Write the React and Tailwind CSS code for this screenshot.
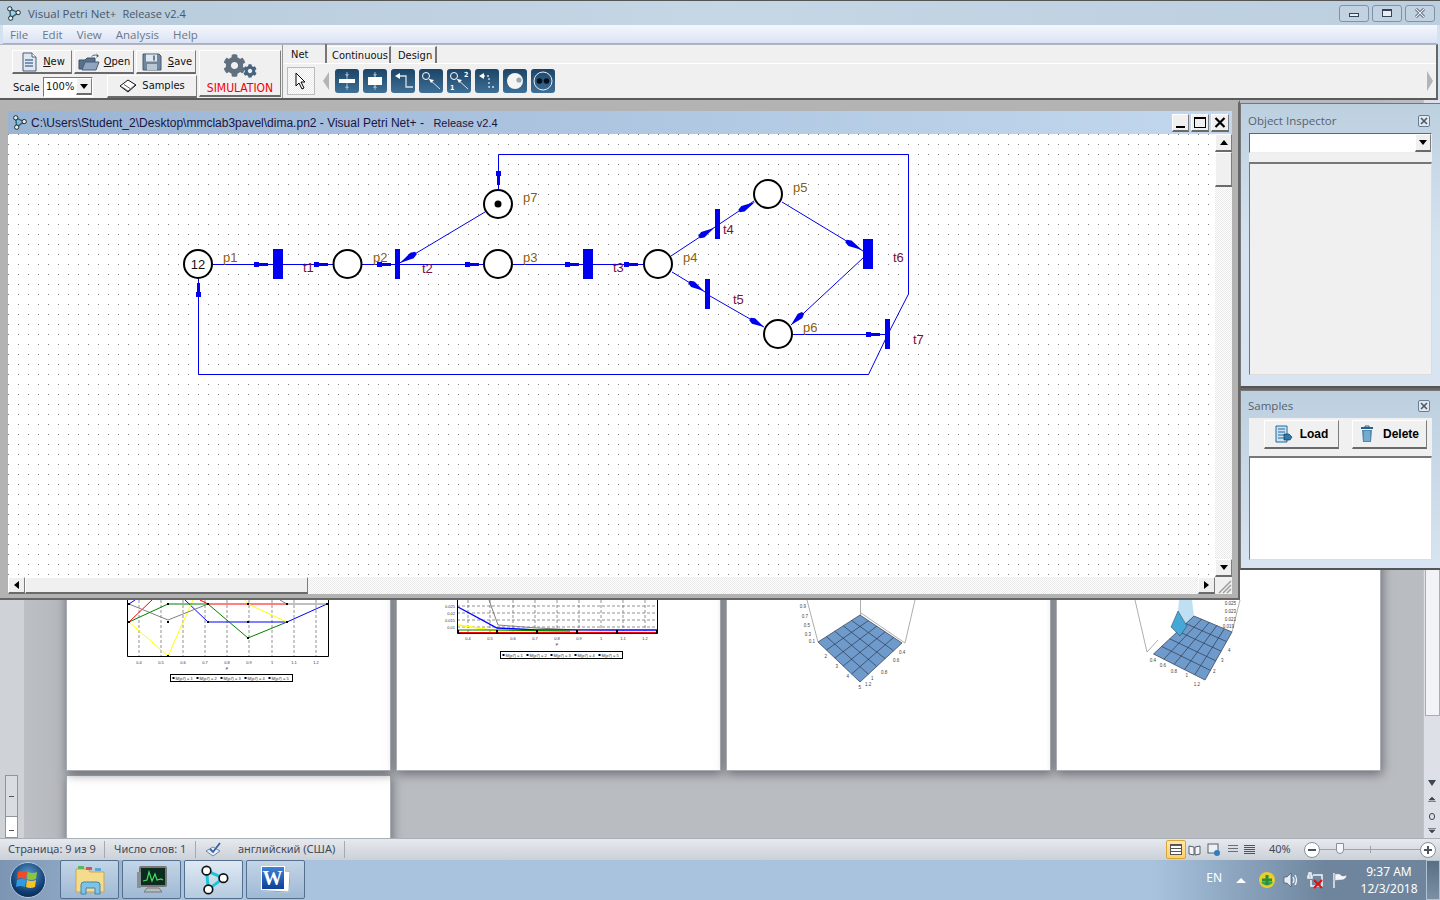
import { FaCog } from "react-icons/fa";

const raised = "border border-t-white border-l-white border-r-[#7d7d7d] border-b-2 border-b-[#6a6a6a] bg-[#f0f0f0]";
const dither = "bg-[repeating-conic-gradient(#e9e9e9_0_25%,#ffffff_0_50%)] bg-[length:2px_2px]";

function NetLogo({ size = 16, light = false }) {
  const stroke = light ? "#17c7d8" : "#1f6f80";
  const fill = light ? "#ffffff" : "#dfeef2";
  return (
    <svg width={size} height={size} viewBox="0 0 16 16">
      <path d="M4 3 L13 7 M13 7 L5 13 M4 3 L5 13" stroke={stroke} strokeWidth="1.6" fill="none" />
      <circle cx="4" cy="3" r="2.3" fill={fill} stroke="#111" strokeWidth="0.9" />
      <circle cx="13" cy="7" r="2.3" fill={fill} stroke="#111" strokeWidth="0.9" />
      <circle cx="5" cy="13" r="2.3" fill={fill} stroke="#111" strokeWidth="0.9" />
    </svg>
  );
}

function NewIcon() {
  return (
    <svg width="20" height="20" viewBox="0 0 20 20">
      <path d="M4 1h9l4 4v14H4z" fill="#dfe7f0" stroke="#4a5d78" />
      <path d="M13 1v4h4" fill="#fff" stroke="#4a5d78" />
      <path d="M6 8h8M6 11h8M6 14h8" stroke="#5a7a9c" strokeWidth="1.3" />
    </svg>
  );
}

function OpenIcon() {
  return (
    <svg width="22" height="20" viewBox="0 0 22 20">
      <path d="M1 8h6l2-2h8v11H1z" fill="#58708c" stroke="#3f5268" />
      <path d="M4 18l3-8h14l-3 8z" fill="#8fa5bd" stroke="#4a5d78" />
      <path d="M13 5c2-3 4-3 6-2l-1-2 3 3-3 2 1-2c-2-1-4 0-6 1z" fill="#3f5f86" />
    </svg>
  );
}

function SaveIcon() {
  return (
    <svg width="20" height="18" viewBox="0 0 20 18">
      <path d="M1 1h16l2 2v14H1z" fill="#71859b" stroke="#4b5c70" />
      <rect x="4" y="1.5" width="11" height="7" fill="#dfe6ee" />
      <rect x="5" y="11" width="10" height="6" fill="#b9c6d4" />
      <rect x="11" y="2.5" width="2" height="5" fill="#6d8098" />
    </svg>
  );
}

function BookIcon() {
  return (
    <svg width="18" height="14" viewBox="0 0 18 14">
      <path d="M1 7L9 1l8 5-8 7z" fill="#fff" stroke="#111" />
      <path d="M3 8l6 4 7-6M5 5.5l6 4" stroke="#333" fill="none" strokeWidth="0.8" />
    </svg>
  );
}

function ToolIcon({ children }) {
  return (
    <div className="w-[24px] h-[24px] rounded-[3px] bg-gradient-to-b from-[#1b4467] to-[#3f7097] shrink-0">
      <svg width="24" height="24" viewBox="0 0 24 24">{children}</svg>
    </div>
  );
}

const TOOL_ICONS = [
  <g key="a"><path d="M12 3v18" stroke="#9fb3c5" /><path d="M10 5l2 3 2-3M10 19l2-3 2 3" fill="#9fb3c5" /><rect x="4" y="10" width="16" height="4" fill="#fff" /></g>,
  <g key="b"><path d="M12 3v18" stroke="#9fb3c5" /><path d="M10 5l2 3 2-3M10 19l2-3 2 3" fill="#9fb3c5" /><rect x="5" y="8" width="14" height="8" fill="#fff" /></g>,
  <g key="c"><path d="M8 7h7v11h7" stroke="#d6e1ea" strokeWidth="1.3" fill="none" /><path d="M9 4L4 7l5 3z" fill="#fff" /></g>,
  <g key="d"><circle cx="7" cy="7" r="3.5" fill="none" stroke="#fff" /><path d="M10 10l11 10" stroke="#d6e1ea" /><path d="M10 10l5 1-3 3z" fill="#fff" /></g>,
  <g key="e"><circle cx="7" cy="7" r="3.5" fill="none" stroke="#fff" /><path d="M10 10l11 10" stroke="#d6e1ea" /><path d="M10 10l5 1-3 3z" fill="#fff" /><text x="17" y="8" fontSize="7" fontWeight="700" fill="#fff">2</text><text x="3" y="21" fontSize="7" fontWeight="700" fill="#fff">1</text></g>,
  <g key="f"><path d="M8 7h6v11h7" stroke="#d6e1ea" strokeWidth="1.3" strokeDasharray="2 2" fill="none" /><path d="M9 4L4 7l5 3z" fill="#fff" /></g>,
  <g key="g"><circle cx="12" cy="12" r="8" fill="#f4f4f4" /><circle cx="16" cy="11" r="2.6" fill="#9aa8b4" /></g>,
  <g key="h"><circle cx="12" cy="12" r="9" fill="none" stroke="#e8eef3" /><circle cx="8.5" cy="12" r="2.8" fill="#05121d" /><circle cx="15.5" cy="12" r="2.8" fill="#05121d" /></g>,
];

function Toolbar() {
  return (
    <div className="flex h-[56px] bg-[#f0f0f0] border-b-2 border-[#5a5a5a] border-r-2 border-r-[#666] mr-[2px] border-t border-t-[#b0b6c4]">
      <div className="flex w-[283px] pl-[12px] pt-[5px] gap-[1px] border-r border-r-[#999]">
        <div className="flex flex-col w-[186px] gap-[1px]">
          <div className="flex gap-[2px]">
            <div className={`${raised} w-[60px] h-[24px] flex items-center justify-center gap-[4px]`}>
              <NewIcon /><span className="mt-[2px] underline decoration-1 underline-offset-1">N</span><span className="mt-[2px] -ml-[4px]">ew</span>
            </div>
            <div className={`${raised} w-[60px] h-[24px] flex items-center justify-center gap-[4px]`}>
              <OpenIcon /><span className="mt-[2px] underline decoration-1 underline-offset-1">O</span><span className="mt-[2px] -ml-[4px]">pen</span>
            </div>
            <div className={`${raised} w-[60px] h-[24px] flex items-center justify-center gap-[6px] pl-[2px]`}>
              <SaveIcon /><span className="mt-[2px] underline decoration-1 underline-offset-1">S</span><span className="mt-[2px] -ml-[6px]">ave</span>
            </div>
          </div>
          <div className="flex items-center">
            <span className="w-[31px] pl-[1px] pt-[3px]">Scale</span>
            <div className="w-[50px] h-[20px] bg-white border border-t-[#777] border-l-[#777] border-r-white border-b-white flex items-center pl-[2px] justify-between">
              <span className="pt-[1px]">100%</span>
              <div className={`${raised} w-[16px] h-[17px] flex items-center justify-center`}>
                <div className="w-0 h-0 border-x-[4px] border-x-transparent border-t-[5px] border-t-black" />
              </div>
            </div>
            <div className={`${raised} ml-[14px] w-[90px] h-[23px] flex items-center justify-center gap-[5px]`}>
              <BookIcon /><span className="pt-[1px]">Samples</span>
            </div>
          </div>
        </div>
        <div className={`${raised} w-[82px] h-[47px] flex flex-col items-center text-[#f00000] text-[12px] leading-[14px]`}>
          <div className="relative h-[30px] w-[34px] text-[#61707f] shrink-0">
            <FaCog className="absolute left-0 top-[3px] text-[23px]" />
            <FaCog className="absolute left-[20px] top-[13px] text-[14px] text-[#46637f]" />
          </div>
          SIMULATION
        </div>
      </div>
      <div className="flex-1 flex flex-col pl-[1px]">
        <div className="flex h-[19px] items-end border-b border-b-white">
          <div className="w-[43px] h-[19px] pl-[7px] pt-[3px] border-r-2 border-r-[#777] flex items-center">Net</div>
          <div className="w-[64px] h-[17px] pl-[5px] pt-[3px] border-t border-t-white border-r-2 border-r-[#777] flex items-center">Continuous</div>
          <div className="w-[45px] h-[17px] pl-[6px] pt-[3px] ml-[1px] border-t border-t-white border-r-2 border-r-[#777] flex items-center">Design</div>
        </div>
        <div className="flex items-center pt-[3px] pr-[3px]">
          <div className={`w-[28px] h-[28px] ml-[3px] border border-[#bbb] ${dither} flex items-center justify-center`}>
            <svg width="14" height="18" viewBox="0 0 14 18">
              <path d="M2 1v13l3-3 3 6 2-1-3-6h4z" fill="#fff" stroke="#000" />
            </svg>
          </div>
          <div className="w-0 h-0 ml-[8px] mr-[6px] border-y-[9px] border-y-transparent border-r-[6px] border-r-[#b4b4b4]" />
          <div className="flex gap-[4px]">{TOOL_ICONS.map((g, i) => <ToolIcon key={i}>{g}</ToolIcon>)}</div>
          <div className="ml-auto w-0 h-0 border-y-[10px] border-y-transparent border-l-[6px] border-l-[#b4b4b4]" />
        </div>
      </div>
    </div>
  );
}

function TopFrame() {
  return (
    <header className="h-[100px] shrink-0 bg-[#d2e2f0] text-[#111] text-[11px] [font-family:'DejaVu_Sans_Condensed','Liberation_Sans',sans-serif]">
      <div className="h-[25px] flex items-center pl-[6px] border-t border-t-[#555] bg-gradient-to-r from-[#b7cbdb] via-[#c5d6e5] to-[#bccfde] [font-family:'Open_Sans',sans-serif] text-[11.5px] text-[#47586a]">
        <NetLogo size={15} />
        <span className="ml-[7px] pt-[1px]">Visual Petri Net+&nbsp; <span className="text-[11px]">Release v2.4</span></span>
        <div className="ml-auto flex gap-[3px] pr-[5px]">
          {[0, 1, 2].map((i) => (
            <div key={i} className="w-[30px] h-[17px] rounded-[3px] border border-[#7f93a8] bg-[#c2d2e0] flex items-center justify-center">
              {i === 0 && <div className="w-[10px] h-[4px] bg-[#e8eef3] border border-[#33445a] mt-[3px]" />}
              {i === 1 && <div className="w-[10px] h-[8px] bg-[#e8eef3] border border-t-2 border-[#33445a]" />}
              {i === 2 && <svg width="12" height="10" viewBox="0 0 12 10"><path d="M2 1l8 8M10 1l-8 8" stroke="#33445a" strokeWidth="2.6" /><path d="M2 1l8 8M10 1l-8 8" stroke="#eef2f5" strokeWidth="1.2" /></svg>}
            </div>
          ))}
        </div>
      </div>
      <div className="h-[19px] flex items-center bg-gradient-to-b from-[#f4f7fc] to-[#dbe2f4] border-b border-b-[#a8b0c4] text-[11.5px] text-[#6b7887] [font-family:'Open_Sans',sans-serif] mr-[3px] ml-[3px] pl-[7px] pt-[2px] gap-[14px]">
        <span>File</span><span>Edit</span><span>View</span><span>Analysis</span><span>Help</span>
      </div>
      <Toolbar />
    </header>
  );
}

const PLACES = [
  { x: 198, y: 264, text: "12" },
  { x: 347.5, y: 264 },
  { x: 498, y: 264 },
  { x: 658, y: 264 },
  { x: 768, y: 194 },
  { x: 778, y: 334 },
  { x: 498, y: 204, token: true },
];

const TRANSITIONS = [
  [273, 249, 10, 30], [395, 249, 5, 30], [583, 249, 10, 30], [715, 209, 5, 30],
  [705, 279, 5, 30], [863, 239, 10, 30], [885, 319, 5, 30],
];

const LINES = [
  "213,264.5 273,264.5", "283,264.5 333,264.5", "362,264.5 395,264.5", "400,264.5 483,264.5",
  "513,264.5 583,264.5", "593,264.5 643,264.5", "793,334.5 885,334.5",
  "888,334 908.5,294 908.5,154.5 498.5,154.5 498.5,189",
  "888,334 868.5,374.5 198.5,374.5 198.5,279",
  "485,212 398,264", "671,256 718,225", "718,225 754,201", "782,202 863,251",
  "863,258 791,325", "672,272 705,292", "710,296 764,327",
];

// square + bar arrowheads on the straight arcs
const BAR_ARROWS_H = [254, 314, 377, 465, 565, 624, 866];
const BAR_Y = [264, 264, 264, 264, 264, 264, 334];

// tapered heads on the slanted arcs: from tail to tip
const HEADS = [
  [416, 253, 400, 263], [699, 237, 714, 228], [739, 211, 755, 202], [846, 241, 862, 250],
  [803, 313, 791, 325], [689, 282, 704, 291], [750, 319, 764, 327],
];

const LABELS = [
  ["p1", 223, 258, "p"], ["t1", 303, 268, "t"], ["p2", 373, 258, "p"], ["t2", 422, 269, "t"],
  ["p3", 523, 258, "p"], ["t3", 613, 268, "t"], ["p4", 683, 258, "p"], ["t4", 723, 230, "t"],
  ["p5", 793, 188, "p"], ["t5", 733, 300, "t"], ["t6", 893, 258, "t"], ["p6", 803, 328, "p"],
  ["t7", 913, 340, "t"], ["p7", 523, 198, "p"],
];

function headPoints([x1, y1, x2, y2]) {
  const d = Math.hypot(x2 - x1, y2 - y1);
  const ux = (x2 - x1) / d, uy = (y2 - y1) / d;
  const nx = -uy, ny = ux;
  const mx = x1 + ux * d * 0.25, my = y1 + uy * d * 0.25;
  return [
    [x1 + nx * 1.5, y1 + ny * 1.5], [mx + nx * 3.2, my + ny * 3.2], [x2, y2],
    [mx - nx * 3.2, my - ny * 3.2], [x1 - nx * 1.5, y1 - ny * 1.5],
  ].map((p) => p.join(",")).join(" ");
}

function PetriNet() {
  return (
    <svg width="1207" height="443" viewBox="8 134 1207 443" className="block bg-white">
      <defs>
        <pattern id="dots" x="8" y="4" width="10" height="10" patternUnits="userSpaceOnUse">
          <rect width="1" height="1" fill="#808080" />
        </pattern>
      </defs>
      <rect x="8" y="134" width="1207" height="443" fill="url(#dots)" />
      {LINES.map((p) => <polyline key={p} points={p} fill="none" stroke="#0000ee" strokeWidth="1" />)}
      {BAR_ARROWS_H.map((x, i) => (
        <g key={x} fill="#0000f0">
          <rect x={x} y={BAR_Y[i] - 2} width="5" height="5" />
          <rect x={x + 5} y={BAR_Y[i] - 1} width="9" height="3" />
        </g>
      ))}
      <g fill="#0000f0">
        <rect x="496" y="171" width="5" height="5" />
        <rect x="497" y="176" width="3" height="9" />
        <rect x="196" y="292" width="5" height="5" />
        <rect x="197" y="283" width="3" height="9" />
      </g>
      {HEADS.map((h) => <polygon key={h.join()} points={headPoints(h)} fill="#0000f0" />)}
      {TRANSITIONS.map(([x, y, w, h]) => <rect key={x} x={x} y={y} width={w} height={h} fill="#0000f0" />)}
      {PLACES.map((p) => (
        <g key={p.x + "-" + p.y}>
          <circle cx={p.x} cy={p.y} r="14" fill="#fff" stroke="#000" strokeWidth="2" />
          {p.token && <circle cx={p.x} cy={p.y} r="3.5" fill="#000" />}
          {p.text && <text x={p.x} y={p.y + 4.5} textAnchor="middle" fontSize="13" fill="#111" fontFamily="Liberation Sans">{p.text}</text>}
        </g>
      ))}
      {LABELS.map(([t, x, y, k]) => (
        <text key={t} x={x} y={y + 4} fontSize="13" fontFamily="Liberation Sans" fill={k === "p" ? "#8f5c08" : "#74103c"}>{t}</text>
      ))}
    </svg>
  );
}

function ChildWindow() {
  return (
    <section className="absolute left-0 top-0 w-[1240px] h-[500px] bg-[#b3b3b3] border-t-[3px] border-t-[#b3b3b3] border-b-2 border-b-[#666] border-r-2 border-r-[#666] pl-[8px] pt-[8px] flex flex-col">
      <div className="h-[23px] w-[1224px] flex items-center pl-[4px] bg-gradient-to-r from-[#9ab4d4] to-[#c3d8ee] text-[12px] text-[#1a1440] [font-family:'Liberation_Sans',sans-serif]">
        <NetLogo size={15} />
        <span className="ml-[4px]">C:\Users\Student_2\Desktop\mmclab3pavel\dima.pn2 - Visual Petri Net+ - <span className="text-[11px]">&nbsp;&nbsp;Release v2.4</span></span>
        <div className="ml-auto flex gap-[2px] pr-[3px]">
          <div className={`${raised} w-[17px] h-[18px] flex items-end justify-center pb-[2px]`}><div className="w-[9px] h-[2px] bg-black" /></div>
          <div className={`${raised} w-[18px] h-[18px] flex items-center justify-center`}><div className="w-[12px] h-[11px] border border-t-2 border-black" /></div>
          <div className={`${raised} w-[18px] h-[18px] flex items-center justify-center`}>
            <svg width="12" height="11" viewBox="0 0 12 11"><path d="M1.5 1l9 9M10.5 1l-9 9" stroke="#000" strokeWidth="2.2" /></svg>
          </div>
        </div>
      </div>
      <div className="flex w-[1224px]">
        <PetriNet />
        <div className={`w-[17px] h-[443px] flex flex-col ${dither}`}>
          <div className={`${raised} h-[18px] flex items-center justify-center`}><div className="w-0 h-0 border-x-[4px] border-x-transparent border-b-[5px] border-b-black" /></div>
          <div className={`${raised} h-[35px]`} />
          <div className="flex-1" />
          <div className={`${raised} h-[18px] flex items-center justify-center`}><div className="w-0 h-0 border-x-[4px] border-x-transparent border-t-[5px] border-t-black" /></div>
        </div>
      </div>
      <div className="flex w-[1224px] h-[17px]">
        <div className={`flex w-[1207px] ${dither}`}>
          <div className={`${raised} w-[17px] flex items-center justify-center`}><div className="w-0 h-0 border-y-[4px] border-y-transparent border-r-[5px] border-r-black" /></div>
          <div className={`${raised} w-[283px]`} />
          <div className="flex-1" />
          <div className={`${raised} w-[17px] flex items-center justify-center`}><div className="w-0 h-0 border-y-[4px] border-y-transparent border-l-[5px] border-l-black" /></div>
        </div>
        <div className="w-[17px] bg-[#f0f0f0] flex items-end justify-end overflow-hidden">
          <svg width="14" height="14" viewBox="0 0 14 14"><path d="M13 1L1 13M13 5L5 13M13 9l-4 4" stroke="#999" strokeWidth="1.4" /></svg>
        </div>
      </div>
    </section>
  );
}

function PanelHeader({ title }) {
  return (
    <div className="h-[24px] flex items-center justify-between pl-[6px] pr-[9px] text-[11.5px] text-[#56626f] [font-family:'Open_Sans',sans-serif]">
      {title}
      <div className="w-[12px] h-[12px] border border-[#6c7d8f] bg-[#dfe8f1] rounded-[2px] flex items-center justify-center">
        <svg width="8" height="8" viewBox="0 0 8 8"><path d="M1 1l6 6M7 1L1 7" stroke="#4b5866" strokeWidth="1.6" /></svg>
      </div>
    </div>
  );
}

function Dock() {
  return (
    <aside className="absolute left-[1240px] top-[3px] w-[200px] h-[467px] flex flex-col gap-[2px] text-[12px] bg-[#666]">
      <div className="h-[285px] bg-gradient-to-b from-[#bdd0e0] via-[#d5e3f0] to-[#d8e4f1] border-t border-l border-[#777] border-b-2 border-b-[#555] pt-[5px] px-[1px]">
        <PanelHeader title="Object Inspector" />
        <div className="ml-[7px] w-[183px] h-[20px] bg-[#fff] border border-t-[#666] border-l-[#666] border-r-[#eee] border-b-[#eee] flex justify-end">
          <div className={`${raised} w-[16px] flex items-center justify-center`}><div className="w-0 h-0 border-x-[4px] border-x-transparent border-t-[5px] border-t-black" /></div>
        </div>
        <div className="ml-[7px] w-[183px] h-[222px] bg-[#f0f0f0] pt-[9px]">
          <div className="h-[213px] bg-[#f0f0f0] border border-t-2 border-[#777] border-r-[#ddd] border-b-[#ddd]" />
        </div>
      </div>
      <div className="h-[180px] bg-gradient-to-b from-[#bdd0e0] to-[#d8e4f1] border-t border-l border-[#777] border-b-2 border-b-[#555] pt-[3px] px-[1px]">
        <PanelHeader title="Samples" />
        <div className="ml-[7px] w-[183px] h-[38px] bg-[#f0f0f0] flex items-start pt-[2px] pl-[15px] gap-[13px] text-[#000] font-bold [font-family:'Liberation_Sans',sans-serif]">
          <div className={`${raised} w-[75px] h-[29px] flex items-center justify-center gap-[7px]`}>
            <svg width="18" height="18" viewBox="0 0 18 18">
              <path d="M1 1h11v16H1z" fill="#cfe1ef" stroke="#1e6a9c" />
              <path d="M3 4h7M3 7h7M3 10h6M3 13h6" stroke="#1e6a9c" />
              <path d="M9 9l5 0 3 3-2 3H9z" fill="#2b7bb0" stroke="#123" strokeWidth="0.6" />
            </svg>
            Load
          </div>
          <div className={`${raised} w-[75px] h-[29px] flex items-center justify-center gap-[9px]`}>
            <svg width="14" height="18" viewBox="0 0 14 18">
              <path d="M1 3h12" stroke="#2c5f86" strokeWidth="2" />
              <path d="M5 2V1h4v1" stroke="#2c5f86" fill="none" />
              <path d="M2 5h10l-1 12H3z" fill="#4c8ab4" />
              <path d="M5 6v10M7 6v10M9 6v10" stroke="#9fcbe4" />
            </svg>
            Delete
          </div>
        </div>
        <div className="ml-[7px] w-[183px] h-[104px] bg-white border border-t-2 border-[#777] border-r-[#ddd] border-b-[#ddd]" />
      </div>
    </aside>
  );
}

function TinyLabels({ items, y }) {
  return items.map(([t, x]) => (
    <text key={t + x} x={x} y={y} fontSize="4" textAnchor="middle" fill="#333" fontFamily="Liberation Sans">{t}</text>
  ));
}

const X_TICKS = ["0.4", "0.5", "0.6", "0.7", "0.8", "0.9", "1", "1.1", "1.2"];

function Legend({ x, y }) {
  const names = [1, 2, 3, 4, 5];
  return (
    <g>
      <rect x={x} y={y} width="122" height="7" fill="#fff" stroke="#000" />
      {names.map((n, i) => (
        <g key={n}>
          <rect x={x + 2 + i * 24} y={y + 2.5} width="2" height="2" fill="#000" />
          <text x={x + 5 + i * 24} y={y + 5} fontSize="4" fill="#222" fontFamily="Liberation Sans">M(p7) = {n}</text>
        </g>
      ))}
    </g>
  );
}

// coordinates below are screen x, page-visible y (600 = top of the svg)
function ChartOne() {
  const grid = [139, 161, 183, 205, 227, 249, 272, 294, 316];
  const pts = [[129, 622], [168, 604], [208, 604], [248, 604], [287, 604], [327, 604], [129, 604], [168, 622], [208, 622], [248, 622], [248, 638], [287, 622], [168, 656]];
  return (
    <svg width="323" height="100" viewBox="67 600 323 100" className="block">
      {grid.map((x) => <path key={x} d={`M${x} 600V656`} stroke="#666" strokeDasharray="3 2" strokeWidth="0.7" />)}
      <polyline points="129,604 135,600" stroke="#0000ff" fill="none" />
      <polyline points="185,600 208,622 287,622 327,604" stroke="#0000ff" fill="none" />
      <polyline points="129,622 152,600" stroke="#ff0000" fill="none" />
      <polyline points="200,600 208,604 287,604" stroke="#ff0000" fill="none" />
      <polyline points="129,622 168,656 193,600" stroke="#ffff00" fill="none" />
      <polyline points="245,600 248,604 287,622" stroke="#ffff00" fill="none" />
      <polyline points="129,604 168,620 208,604" stroke="#808080" fill="none" />
      <polyline points="280,600 287,604 327,604" stroke="#808080" fill="none" />
      <polyline points="129,622 168,604 208,604 248,638 287,622" stroke="#008000" fill="none" />
      {pts.map(([x, y]) => <rect key={x + "-" + y} x={x - 1} y={y - 1} width="2" height="2" fill="#000" />)}
      <path d="M127.5 600V656.5H328.5V600" fill="none" stroke="#000" />
      <TinyLabels y={664} items={X_TICKS.map((t, i) => [t, grid[i]])} />
      <text x="227" y="669" fontSize="4" textAnchor="middle" fill="#222">μ</text>
      <Legend x={170.5} y={674.5} />
    </svg>
  );
}

function ChartTwo() {
  const grid = [468, 490, 513, 535, 557, 579, 601, 623, 645];
  const rows = [606, 613, 620, 627];
  const yt = ["0.025", "0.02", "0.015", "0.01"];
  return (
    <svg width="323" height="100" viewBox="397 600 323 100" className="block">
      {grid.map((x) => <path key={x} d={`M${x} 600V633`} stroke="#666" strokeDasharray="3 2" strokeWidth="0.7" />)}
      {rows.map((y) => <path key={y} d={`M457 ${y}H657`} stroke="#666" strokeDasharray="3 2" strokeWidth="0.7" />)}
      <polyline points="489,600 498,625 537,628 577,630" stroke="#808080" fill="none" />
      <polyline points="458,607 497,628 537,630 657,630" stroke="#0000ff" fill="none" strokeWidth="1.4" />
      <polyline points="458,625 497,631 657,632" stroke="#ffff00" fill="none" strokeWidth="1.4" />
      <polyline points="458,630 497,630 570,631" stroke="#008000" fill="none" strokeWidth="1.2" />
      <path d="M458 633H657" stroke="#ff0000" strokeWidth="2" />
      {[458, 497, 537, 577, 617, 657].map((x) => <rect key={x} x={x - 1} y="630" width="2" height="3" fill="#000" />)}
      <path d="M457.5 600V633.5H657.5V600" fill="none" stroke="#000" />
      {yt.map((t, i) => <text key={t} x="455" y={rows[i] + 1.5} fontSize="4" textAnchor="end" fill="#333">{t}</text>)}
      <TinyLabels y={640} items={X_TICKS.map((t, i) => [t, grid[i]])} />
      <text x="557" y="645" fontSize="4" textAnchor="middle" fill="#222">μ</text>
      <Legend x={500.5} y={651.5} />
    </svg>
  );
}

function lerp(a, b, t) { return [a[0] + (b[0] - a[0]) * t, a[1] + (b[1] - a[1]) * t]; }

function SurfaceGrid({ a, b, c, d, n = 5 }) {
  const parts = [];
  for (let i = 1; i < n; i++) {
    const t = i / n;
    const p = lerp(a, b, t), q = lerp(d, c, t), r = lerp(a, d, t), s = lerp(b, c, t);
    parts.push(`M${p[0]} ${p[1]}L${q[0]} ${q[1]}M${r[0]} ${r[1]}L${s[0]} ${s[1]}`);
  }
  return (
    <g>
      <polygon points={[a, b, c, d].map((p) => p.join(",")).join(" ")} fill="#6f9bcc" stroke="#2c3a4c" strokeWidth="0.7" />
      <path d={parts.join("")} stroke="#2c3a4c" strokeWidth="0.7" fill="none" />
    </g>
  );
}

function tinyText(items, anchor) {
  return items.map(([t, x, y]) => (
    <text key={t + x} x={x} y={y} fontSize="4.5" fill="#444" textAnchor={anchor} fontFamily="Liberation Sans">{t}</text>
  ));
}

function SurfaceOne() {
  return (
    <svg width="323" height="100" viewBox="727 600 323 100" className="block">
      <path d="M807 600L818 642M860.5 600V615M915 600L905 643M861 613L905 643" stroke="#999" fill="none" strokeWidth="0.8" />
      <SurfaceGrid a={[860, 615]} b={[902, 643]} c={[860, 682]} d={[818, 642]} />
      {tinyText([["0.9", 806, 608], ["0.7", 808, 618], ["0.5", 810, 627], ["0.3", 811, 636], ["0.1", 815, 643]], "end")}
      {tinyText([["2", 827, 658], ["3", 838, 668], ["4", 849, 678], ["5", 861, 689]], "end")}
      {tinyText([["0.4", 899, 654], ["0.6", 893, 662], ["0.8", 881, 674], ["1", 871, 680], ["1.2", 865, 686]], "start")}
    </svg>
  );
}

function SurfaceTwo() {
  return (
    <svg width="323" height="100" viewBox="1057 600 323 100" className="block">
      <path d="M1135 600L1147 652L1158 640M1240 600L1232 632" stroke="#999" fill="none" strokeWidth="0.8" />
      <polygon points="1179,600 1192,600 1194,616 1187,626 1178,611" fill="#bfe0f2" />
      <SurfaceGrid a={[1194, 616]} b={[1232, 632]} c={[1205, 680]} d={[1153.5, 654]} />
      <polygon points="1178,611 1187,626 1180,636 1171,627" fill="#45a9d8" stroke="#2c3a4c" strokeWidth="0.5" />
      {tinyText([["0.025", 1236, 605], ["0.023", 1236, 613], ["0.021", 1236, 621], ["0.019", 1234, 628]], "end")}
      {tinyText([["0.4", 1156, 662], ["0.6", 1166, 667], ["0.8", 1177, 673], ["1", 1188, 677], ["1.2", 1200, 686]], "end")}
      {tinyText([["4", 1228, 652], ["3", 1221, 662], ["2", 1213, 673]], "start")}
    </svg>
  );
}

function Page({ children, tall = true }) {
  return (
    <div className={`w-[323px] bg-white shadow-[0_0_0_1px_#a9adb3,1px_3px_10px_1px_rgba(50,54,60,0.6)] ${tall ? "h-[660px] pt-[490px]" : "h-[80px]"}`}>
      {children}
    </div>
  );
}

function ScrollStep({ dir }) {
  const d = dir === "up" ? "M1 4L4 1l3 3zM0 5.5h8" : "M1 2l3 3 3-3zM0 .5h8";
  return (
    <svg width="8" height="7" viewBox="0 0 8 7">
      <path d={d} fill="#3c4650" stroke="#3c4650" strokeWidth="0.6" />
    </svg>
  );
}

function WordBackdrop() {
  return (
    <div className="absolute inset-0 bg-[#b9bcc1] flex">
      <div className="w-[24px] shrink-0 bg-[#cfd3d8] relative">
        <div className="absolute left-[5px] top-[675px] w-[13px] h-[63px] border border-[#8f959c] flex flex-col">
          <div className="h-[41px] bg-[#d9dce0] border-b border-[#8f959c] flex items-center justify-center"><div className="w-[5px] h-[1px] bg-[#555]" /></div>
          <div className="flex-1 bg-white flex items-end justify-center pb-[6px]"><div className="w-[5px] h-[1px] bg-[#555]" /></div>
        </div>
      </div>
      <div className="w-[43px] shrink-0 bg-gradient-to-r from-[#bcbfc3] to-[#b4b7bc]" />
      <div className="flex-1 pt-[10px]">
        <div className="flex gap-[7px]">
          <Page><ChartOne /></Page>
          <Page><ChartTwo /></Page>
          <Page><SurfaceOne /></Page>
          <Page><SurfaceTwo /></Page>
        </div>
        <div className="mt-[6px]"><Page tall={false} /></div>
      </div>
      <div className="w-[17px] shrink-0 bg-[#dde1e7] border-l border-[#c0c4ca] flex flex-col items-center text-[#3c4650]">
        <div className="h-[470px]" />
        <div className="w-[15px] h-[147px] bg-[#f1f3f6] border border-[#a7adb5]" />
        <div className="h-[59px]" />
        <div className="h-[16px] flex items-center"><div className="w-0 h-0 border-x-[4px] border-x-transparent border-t-[6px] border-t-[#3c4650]" /></div>
        <div className="h-[17px] flex items-center"><ScrollStep dir="up" /></div>
        <div className="h-[17px] flex items-center"><div className="w-[6px] h-[7px] rounded-full border border-[#3c4650]" /></div>
        <div className="h-[13px] flex items-center"><ScrollStep dir="down" /></div>
      </div>
    </div>
  );
}

function StatusBar() {
  return (
    <div className="h-[22px] shrink-0 flex items-center bg-gradient-to-b from-[#e6e9ee] to-[#ccd1d8] border-t border-[#aab0b8] text-[11px] text-[#3f4a58] [font-family:'Noto_Sans',sans-serif]">
      <span className="w-[105px] pl-[8px] border-r border-[#a4aab2]">Страница: 9 из 9</span>
      <span className="w-[91px] pl-[9px] border-r border-[#a4aab2]">Число слов: 1</span>
      <span className="w-[149px] pl-[9px] flex items-center gap-[16px] border-r border-[#a4aab2]">
        <svg width="17" height="15" viewBox="0 0 17 15">
          <path d="M1 9l7-4 7 4-7 5z" fill="#e8f0f8" stroke="#6c86a8" />
          <path d="M5 7l3 3 7-9" stroke="#3560a0" strokeWidth="1.8" fill="none" />
        </svg>
        <span>английский (США)</span>
      </span>
      <div className="ml-auto flex items-center pr-[4px]">
        <div className="w-[20px] h-[19px] rounded-[2px] bg-gradient-to-b from-[#ffe9a8] to-[#ffcf62] border border-[#d9a53a] flex items-center justify-center">
          <div className="w-[12px] h-[11px] bg-white border border-[#555] bg-[repeating-linear-gradient(180deg,#555_0_1px,#fff_1px_3px)]" />
        </div>
        <div className="flex gap-[6px] ml-[2px] items-center">
          <svg width="13" height="12" viewBox="0 0 13 12"><path d="M1 2l5 1v8l-5-1zM12 2L7 3v8l5-1z" fill="#f4f6f8" stroke="#55606c" /></svg>
          <svg width="13" height="13" viewBox="0 0 13 13"><rect x="1" y="1" width="10" height="9" fill="#eef1f4" stroke="#55606c" /><circle cx="10" cy="10" r="3" fill="#2f7fc0" /></svg>
          <div className="w-[10px] h-[9px] bg-[repeating-linear-gradient(180deg,#66707c_0_1px,transparent_1px_3px)] ml-[2px]" />
          <div className="w-[11px] h-[10px] bg-[repeating-linear-gradient(180deg,#4c5662_0_1px,transparent_1px_2px)]" />
        </div>
        <span className="ml-[14px] w-[35px]">40%</span>
        <div className="w-[16px] h-[16px] rounded-full border border-[#87909b] bg-white flex items-center justify-center"><div className="w-[8px] h-[2px] bg-[#4c5662]" /></div>
        <div className="relative w-[100px] h-[1px] bg-[#9aa2ac]">
          <div className="absolute left-[16px] -top-[6px] w-[8px] h-[11px] bg-[#f4f6f8] border border-[#87909b] rounded-b-[4px]" />
          <div className="absolute left-[50px] -top-[3px] w-[1px] h-[7px] bg-[#9aa2ac]" />
        </div>
        <div className="w-[16px] h-[16px] rounded-full border border-[#87909b] bg-white flex items-center justify-center relative">
          <div className="w-[8px] h-[2px] bg-[#4c5662]" />
          <div className="absolute w-[2px] h-[8px] bg-[#4c5662]" />
        </div>
      </div>
    </div>
  );
}

function WindowsOrb() {
  return (
    <svg width="38" height="38" viewBox="0 0 38 38">
      <defs>
        <radialGradient id="orb" cx="50%" cy="35%" r="65%">
          <stop offset="0%" stopColor="#5e9fd0" />
          <stop offset="75%" stopColor="#123f75" />
          <stop offset="100%" stopColor="#0a2a50" />
        </radialGradient>
      </defs>
      <circle cx="19" cy="19" r="17.5" fill="url(#orb)" stroke="#b7cde0" />
      <path d="M9 11q4-2 9 0l-1 7q-5-2-9 0z" fill="#f04b23" />
      <path d="M19 11q4 2 9 0l-1 7q-5 2-9 0z" fill="#8cc63e" />
      <path d="M8 19q4-2 9 0l-1 7q-5-2-9 0z" fill="#2f9be0" />
      <path d="M18 19q4 2 9 0l-1 7q-5 2-9 0z" fill="#f7c325" />
    </svg>
  );
}

function TaskButton({ active, children }) {
  return (
    <div className={`w-[59px] h-[39px] flex items-center justify-center border border-[#55708e] rounded-[2px] ${active ? "bg-gradient-to-b from-[#dfe9f3] to-[#b6cbe0]" : "bg-gradient-to-b from-[#c3d5e7] to-[#9fb9d4]"}`}>
      {children}
    </div>
  );
}

function Taskbar() {
  return (
    <div className="h-[40px] shrink-0 flex items-start bg-[linear-gradient(90deg,#7b95b2_0%,#a9c3df_12%,#a9c3df_80%,#6e859d_92%,#6e859d_100%)] text-white text-[12px] [font-family:'Noto_Sans',sans-serif]">
      <div className="w-[60px] h-[40px] flex items-center justify-center pr-[4px]"><WindowsOrb /></div>
      <div className="flex gap-[3px]">
        <TaskButton>
          <svg width="34" height="32" viewBox="0 0 34 32">
            <path d="M3 5h12l2 3h14v20H3z" fill="#f4dc8c" stroke="#c8a850" />
            <rect x="5" y="2" width="6" height="3" fill="#5cb85c" />
            <rect x="13" y="3" width="6" height="3" fill="#d9534f" />
            <rect x="22" y="4" width="6" height="3" fill="#5ba6dc" />
            <path d="M8 30V21q0-3 3-3h13q3 0 3 3v9h-5v-6h-9v6z" fill="#7fc2e6" stroke="#3d85b0" />
          </svg>
        </TaskButton>
        <TaskButton>
          <svg width="34" height="32" viewBox="0 0 34 32">
            <rect x="5" y="3" width="26" height="19" rx="1" fill="#0c2a1e" stroke="#777" strokeWidth="2" />
            <path d="M8 17l4-1 2-8 3 9 3-7 2 6 4-1 2 1" stroke="#40e060" strokeWidth="1.2" fill="none" />
            <path d="M2 8h4v16H2z" fill="#8a8f94" />
            <path d="M12 24h12l3 4H9z" fill="#b8bdc2" stroke="#777" />
          </svg>
        </TaskButton>
        <TaskButton active>
          <NetLogo size={30} light />
        </TaskButton>
        <TaskButton>
          <div className="relative w-[32px] h-[32px]">
            <div className="absolute left-[4px] top-[6px] w-[26px] h-[22px] bg-white border border-[#9aa8b8] rotate-3" />
            <div className="absolute left-[1px] top-[2px] w-[24px] h-[24px] bg-gradient-to-b from-[#3f82d4] to-[#0f3f98] border border-white flex items-center justify-center text-[20px] font-bold text-white [font-family:'Liberation_Serif',serif]">W</div>
          </div>
        </TaskButton>
      </div>
      <div className="ml-auto flex items-center h-[40px] pr-[24px]">
        <span className="mr-[14px] -mt-[4px]">EN</span>
        <div className="w-0 h-0 border-x-[5px] border-x-transparent border-b-[5px] border-b-white mr-[12px]" />
        <svg width="18" height="18" viewBox="0 0 18 18" className="mr-[7px]">
          <circle cx="9" cy="9" r="8" fill="#e8cf2c" />
          <path d="M3 11a7 7 0 0 0 12 0" fill="#3aa845" />
          <path d="M9 4v10M4 9h10" stroke="#2c8c3a" strokeWidth="3" />
        </svg>
        <svg width="16" height="16" viewBox="0 0 16 16" className="mr-[8px]">
          <path d="M1 5h3l4-4v14l-4-4H1z" fill="#e8eef4" stroke="#42566c" strokeWidth="0.7" />
          <path d="M10 5q2 3 0 6M12 3q3 5 0 10" stroke="#f0f4f8" fill="none" strokeWidth="1.3" />
        </svg>
        <svg width="17" height="17" viewBox="0 0 17 17" className="mr-[8px]">
          <path d="M2 1h2v3h1v2H1V4h1zM6 3h9v11H4V8" fill="none" stroke="#f4f6f8" strokeWidth="1.5" />
          <path d="M7 8l8 8M15 8l-8 8" stroke="#e01010" strokeWidth="2" />
        </svg>
        <svg width="16" height="17" viewBox="0 0 16 17" className="mr-[14px]">
          <path d="M2 1v15" stroke="#f4f6f8" strokeWidth="1.4" />
          <path d="M3 2q5-1 6 1t6 0q-1 5-6 5T3 9z" fill="#f4f6f8" stroke="#54687c" strokeWidth="0.4" />
        </svg>
        <div className="flex flex-col items-center leading-[17px] w-[54px]">
          <span>9:37 AM</span>
          <span>12/3/2018</span>
        </div>
      </div>
      <div className="absolute right-0 bottom-0 w-[14px] h-[40px] bg-gradient-to-b from-[#5a6e82] to-[#7b90a5] border border-[#b3c2d0]" />
    </div>
  );
}

export default function App() {
  return (
    <div className="relative w-[1440px] h-[900px] overflow-hidden flex flex-col bg-[#b9bcc1] [font-family:'Liberation_Sans',sans-serif]">
      <TopFrame />
      <main className="relative flex-1 overflow-hidden">
        <WordBackdrop />
        <ChildWindow />
        <Dock />
      </main>
      <StatusBar />
      <Taskbar />
    </div>
  );
}
